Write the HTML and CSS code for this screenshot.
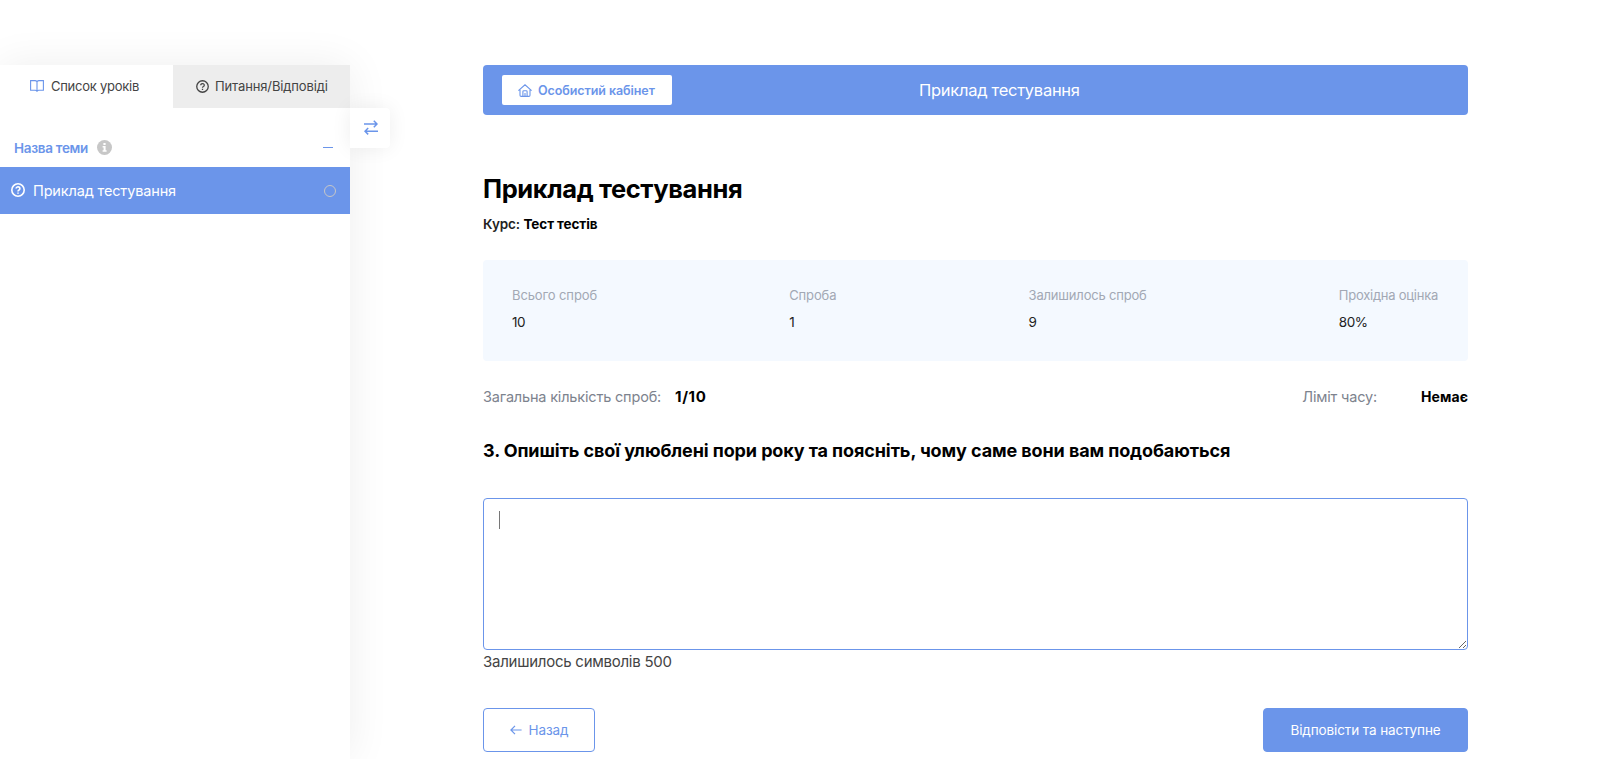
FILE: index.html
```html
<!DOCTYPE html>
<html lang="uk">

<head>
    <meta charset="UTF-8">
    <meta name="viewport" content="width=device-width, initial-scale=1.0">
    <title>Приклад тестування</title>
    <link rel="stylesheet" href="styles.css">
</head>

<body>
    <div class="page">
        <!-- Sidebar with lessons -->
        <aside class="sidebar">
            <div class="tabs">
                <div class="tab tab-lessons">
                    <svg class="icon-book" width="14" height="12" viewBox="0 0 14 12" fill="none" stroke="currentColor" stroke-width="1.1">
                        <path d="M7 1.8Q6.3 .6 5 .6H.6v9.6h4.6Q6.4 10.2 7 11.3Q7.6 10.2 8.8 10.2h4.6V.6H9Q7.7 .6 7 1.8v9.5"/>
                    </svg>
                    <span>Список уроків</span>
                </div>
                <div class="tab tab-questions">
                    <svg width="13" height="13" viewBox="0 0 14 14" fill="none" stroke="currentColor" stroke-width="1.4">
                        <circle cx="7" cy="7" r="6.2"/>
                        <path d="M5.1 5.6a1.9 1.7 0 1 1 2.9 1.4Q7 7.5 7 8.4M7 9.5v1.3"/>
                    </svg>
                    <span>Питання/Відповіді</span>
                </div>
            </div>

            <div class="topic">
                <span class="topic-title">Назва теми</span>
                <svg class="topic-info" width="15" height="15" viewBox="0 0 15 15">
                    <circle cx="7.5" cy="7.5" r="7.5" fill="#c7c7c7"/>
                    <path d="M6.4 3h2.2v2H6.4zM5.6 6.1h3v4.2h1v1.4H5.6v-1.4h1V7.5h-1z" fill="#fff"/>
                </svg>
                <span class="topic-minus"></span>
            </div>

            <div class="lesson">
                <svg class="lesson-icon" width="14" height="14" viewBox="0 0 14 14" fill="none" stroke="currentColor" stroke-width="1.6">
                    <circle cx="7" cy="7" r="6.2"/>
                    <path d="M5.1 5.6a1.9 1.7 0 1 1 2.9 1.4Q7 7.5 7 8.4M7 9.5v1.3"/>
                </svg>
                <span class="lesson-title">Приклад тестування</span>
                <span class="lesson-status"></span>
            </div>

            <button class="sidebar-toggle">
                <svg width="14" height="15" viewBox="0 0 14 15" fill="none" stroke="currentColor" stroke-width="1.5">
                    <path d="M0 4h13M9.8 .8L13 4 9.8 7.2M14 11.2H1M4.2 8L1 11.2l3.2 3.2"/>
                </svg>
            </button>
        </aside>

        <!-- Quiz content -->
        <main class="content">
            <div class="topbar">
                <a class="cabinet-btn">
                    <svg width="14" height="13" viewBox="0 0 14 13" fill="none" stroke="currentColor" stroke-width="1.1">
                        <path d="M.4 6.7L7 .8l6.6 5.9M2 5.8v5.5q0 1.1 1.1 1.1h7.8q1.1 0 1.1-1.1V5.8M4.9 12.4V7.6q0-.9.9-.9h2.4q.9 0 .9.9v4.8M7 12.4V9"/>
                    </svg>
                    <span>Особистий кабінет</span>
                </a>
                <span class="topbar-title">Приклад тестування</span>
            </div>

            <h1 class="quiz-title">Приклад тестування</h1>
            <div class="quiz-course"><span>Курс:</span> <strong>Тест тестів</strong></div>

            <div class="stats">
                <div class="stat">
                    <span class="stat-label">Всього спроб</span>
                    <span class="stat-value">10</span>
                </div>
                <div class="stat">
                    <span class="stat-label">Спроба</span>
                    <span class="stat-value">1</span>
                </div>
                <div class="stat">
                    <span class="stat-label stat-left">Залишилось спроб</span>
                    <span class="stat-value">9</span>
                </div>
                <div class="stat">
                    <span class="stat-label stat-grade">Прохідна оцінка</span>
                    <span class="stat-value">80%</span>
                </div>
            </div>

            <div class="meta">
                <div class="meta-item">
                    <span>Загальна кількість спроб:</span>
                    <strong class="meta-count">1/10</strong>
                </div>
                <div class="meta-item meta-time">
                    <span>Ліміт часу:</span>
                    <strong class="meta-limit">Немає</strong>
                </div>
            </div>

            <h2 class="question">3. Опишіть свої улюблені пори року та поясніть, чому саме вони вам подобаються</h2>

            <div class="answer">
                <textarea class="answer-field"></textarea>
                <span class="answer-caret"></span>
            </div>
            <div class="answer-left">Залишилось символів 500</div>

            <div class="actions">
                <button class="btn btn-back">
                    <svg width="12" height="10" viewBox="0 0 12 10" fill="none" stroke="currentColor" stroke-width="1.2">
                        <path d="M11.6 5H1M5 .9L.9 5 5 9.1"/>
                    </svg>
                    <span>Назад</span>
                </button>
                <button class="btn btn-next">Відповісти та наступне</button>
            </div>
        </main>
    </div>
</body>

</html>
```
FILE: styles.css
```css
* {
    box-sizing: border-box;
}

body {
    margin: 0;
    font-family: Inter, "Liberation Sans", sans-serif;
    color: #41454f;
    background: #fff;
    overflow: hidden;
}

svg {
    display: block;
    flex-shrink: 0;
}

button {
    font-family: inherit;
    padding: 0;
}

.page {
    display: flex;
    height: 759px;
    padding-top: 65px;
}

/* Sidebar */
.sidebar {
    position: relative;
    width: 350px;
    flex-shrink: 0;
    background: #fff;
    box-shadow: 0 0 40px rgba(0, 0, 0, 0.07);
}

.tabs {
    display: flex;
    height: 43px;
}

.tab {
    display: flex;
    align-items: center;
    padding-bottom: 1px;
    font-size: 13px;
    color: #444;
    white-space: nowrap;
}

.tab-lessons {
    width: 173px;
    padding-left: 30px;
    gap: 7px;
    letter-spacing: -0.26px;
}

.tab-questions {
    flex: 1;
    padding-left: 23px;
    gap: 6px;
    letter-spacing: -0.13px;
    background: #ededed;
}

.icon-book {
    color: #6b95ea;
}

.topic {
    display: flex;
    align-items: center;
    height: 59px;
    padding: 20px 17px 0 14px;
    color: #6b95ea;
}

.topic-title {
    font-size: 13.5px;
    font-weight: 600;
    letter-spacing: -0.3px;
}

.topic-info {
    margin-left: 9px;
}

.topic-minus {
    width: 10px;
    height: 1px;
    margin-left: auto;
    background: #6b95ea;
}

.lesson {
    display: flex;
    align-items: center;
    height: 47px;
    padding: 0 14px 0 11px;
    color: #fff;
    background: #6b95ea;
}

.lesson-icon {
    margin-bottom: 2px;
}

.lesson-title {
    margin-left: 8px;
    font-size: 14.5px;
    letter-spacing: -0.15px;
}

.lesson-status {
    width: 12px;
    height: 12px;
    margin-left: auto;
    border: 1px solid #c7c7c7;
    border-radius: 50%;
}

/* Hangs off the right edge of the sidebar */
.sidebar-toggle {
    position: absolute;
    top: 43px;
    left: 350px;
    display: flex;
    align-items: center;
    justify-content: center;
    width: 40px;
    height: 40px;
    padding: 0 0 1px 1px;
    border: 0;
    border-radius: 0 4px 4px 0;
    color: #6b95ea;
    background: #fff;
    box-shadow: 0 0 20px rgba(0, 0, 0, 0.07);
}

/* Content */
.content {
    width: 985px;
    margin-left: 133px;
}

.topbar {
    display: grid;
    grid-template-columns: 417px auto;
    align-items: center;
    height: 50px;
    padding: 0 19px;
    border-radius: 4px;
    background: #6b95ea;
}

.cabinet-btn {
    display: flex;
    align-items: center;
    gap: 6px;
    width: 170px;
    height: 30px;
    padding-left: 16px;
    border-radius: 2px;
    font-size: 12.5px;
    font-weight: 600;
    letter-spacing: -0.08px;
    color: #6b95ea;
    background: #fff;
    white-space: nowrap;
}

.topbar-title {
    font-size: 16.5px;
    letter-spacing: -0.28px;
    color: #fff;
}

.quiz-title {
    margin: 58px 0 0;
    font-size: 25.5px;
    line-height: 32px;
    font-weight: 700;
    letter-spacing: -0.4px;
    color: #000;
}

.quiz-course {
    margin-top: 9px;
    font-size: 13.5px;
    line-height: 20px;
    font-weight: 600;
    letter-spacing: -0.08px;
    color: #222;
}

.quiz-course strong {
    font-weight: 700;
    color: #000;
}

.stats {
    display: flex;
    justify-content: space-between;
    height: 101px;
    margin-top: 26px;
    padding: 25px 30px 0 29px;
    border-radius: 4px;
    background: #f4f9ff;
}

.stat {
    display: flex;
    flex-direction: column;
    gap: 7px;
}

.stat-label {
    font-size: 13px;
    line-height: 20px;
    letter-spacing: -0.12px;
    color: #a2a8b4;
}

.stat-left {
    letter-spacing: -0.19px;
}

.stat-grade {
    letter-spacing: -0.25px;
}

.stat-value {
    font-size: 13.5px;
    line-height: 20px;
    letter-spacing: -0.5px;
    color: #222;
}

.meta {
    display: flex;
    justify-content: space-between;
    margin-top: 26px;
    font-size: 14.5px;
    line-height: 20px;
    color: #7d838e;
}

.meta-item {
    display: flex;
    gap: 14px;
    letter-spacing: -0.18px;
}

.meta-time {
    gap: 44px;
}

.meta strong {
    color: #000;
    font-weight: 700;
}

.meta-count {
    font-size: 15px;
    letter-spacing: 0.6px;
}

.meta-limit {
    font-size: 14px;
    letter-spacing: 0.1px;
}

.question {
    margin: 31px 0 0;
    font-size: 18px;
    line-height: 26px;
    font-weight: 700;
    letter-spacing: -0.1px;
    color: #000;
    white-space: nowrap;
}

.answer {
    position: relative;
    margin-top: 34px;
}

.answer-field {
    display: block;
    width: 100%;
    height: 152px;
    padding: 12px 16px;
    border: 1px solid #6b95ea;
    border-radius: 4px;
    outline: 0;
    font: 15px Inter, sans-serif;
    background: #fff;
    resize: vertical;
}

.answer-caret {
    position: absolute;
    top: 13px;
    left: 16px;
    width: 1px;
    height: 18px;
    background: #777;
}

.answer-left {
    margin-top: 1px;
    font-size: 15px;
    line-height: 22px;
    letter-spacing: -0.26px;
    color: #444;
}

.actions {
    display: flex;
    justify-content: space-between;
    margin-top: 35px;
}

.btn {
    display: flex;
    align-items: center;
    justify-content: center;
    height: 44px;
    padding-bottom: 1px;
    border: 1px solid #6b95ea;
    border-radius: 4px;
    font-size: 13.5px;
    letter-spacing: -0.1px;
}

.btn-back {
    width: 112px;
    gap: 7px;
    color: #6b95ea;
    background: #fff;
}

.btn-next {
    width: 205px;
    color: #fff;
    background: #6b95ea;
}
```
